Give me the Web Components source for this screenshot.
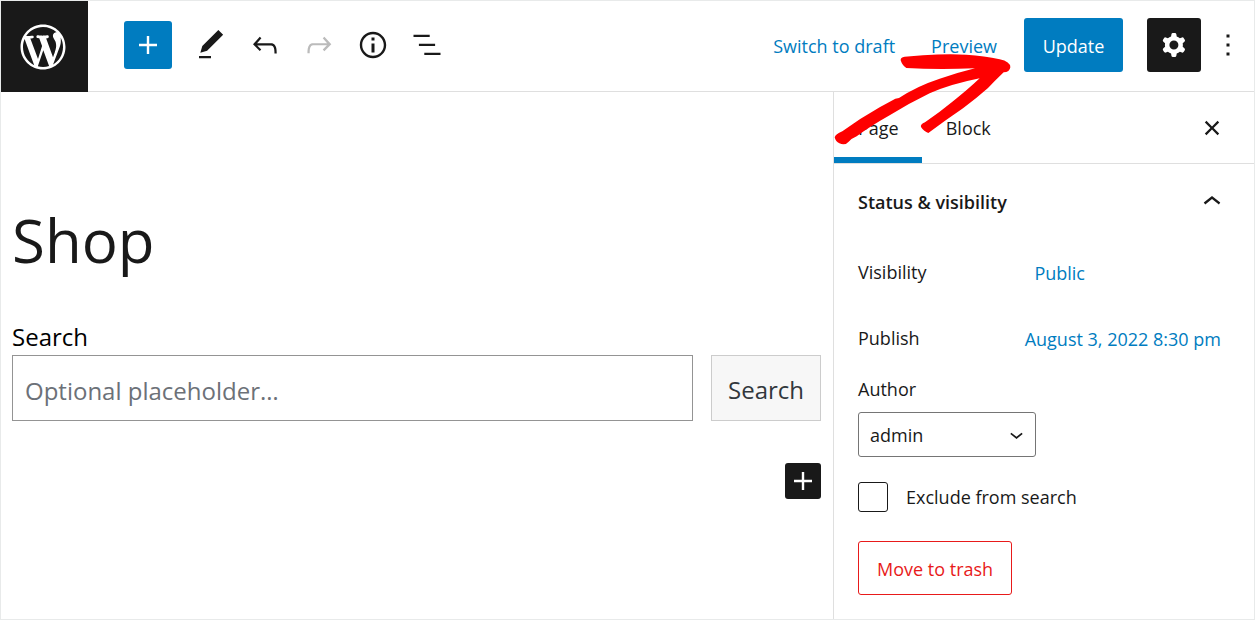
<!DOCTYPE html>
<html lang="en">
<head>
<meta charset="utf-8">
<meta name="viewport" content="width=device-width, initial-scale=1">
<title>Edit Page</title>
<style>
    :root {
        --blue: #007cc0;
        --ink: #191919;
        --line: #dfdfdf;
    }
    body {
        margin: 0;
        background: #fff;
        color: var(--ink);
        font: 18px/27px "Open Sans", "Noto Sans", sans-serif;
    }
</style>
</head>
<body>
<page-editor>
    <editor-header slot="header"></editor-header>
    <editor-canvas slot="content" heading="Shop"></editor-canvas>
    <settings-sidebar slot="sidebar">
        <settings-row>Visibility<button slot="value">Public</button></settings-row>
        <settings-row>Publish<button slot="value">August 3, 2022 8:30 pm</button></settings-row>
    </settings-sidebar>
    <pointer-arrow slot="overlay"></pointer-arrow>
</page-editor>

<script>
const icons = {
    wordpress: 'M20 10c0-5.51-4.49-10-10-10C4.48 0 0 4.49 0 10c0 5.52 4.48 10 10 10 5.51 0 10-4.48 10-10zM7.78 15.37L4.37 6.22c.55-.02 1.17-.08 1.17-.08.5-.06.44-1.13-.06-1.11 0 0-1.45.11-2.37.11-.18 0-.37 0-.58-.01C4.12 2.69 6.87 1.11 10 1.11c2.33 0 4.45.87 6.05 2.34-.68-.11-1.65.39-1.65 1.58 0 .74.45 1.36.9 2.1.35.61.55 1.36.55 2.46 0 1.49-1.4 5-1.4 5l-3.03-8.37c.54-.02.82-.17.82-.17.5-.05.44-1.25-.06-1.22 0 0-1.44.12-2.38.12-.87 0-2.33-.12-2.33-.12-.5-.03-.56 1.2-.06 1.22l.92.08 1.26 3.41zM17.41 10c.24-.64.74-1.87.43-4.25.7 1.29 1.05 2.71 1.05 4.25 0 3.29-1.73 6.24-4.4 7.78.97-2.59 1.94-5.2 2.92-7.78zM6.1 18.09C3.12 16.65 1.11 13.53 1.11 10c0-1.3.23-2.48.72-3.59C3.25 10.3 4.67 14.2 6.1 18.09zm4.03-6.63l2.58 6.98c-.86.29-1.76.45-2.71.45-.79 0-1.57-.11-2.29-.33.81-2.38 1.62-4.74 2.42-7.1z',
    plus: 'M18 11.2h-5.2V6h-1.6v5.2H6v1.6h5.2V18h1.6v-5.2H18z',
    edit: 'M20.1 5.1L16.9 2 6.2 12.7l-1.3 4.4 4.5-1.3L20.1 5.1zM4 20.8h8v-1.5H4v1.5z',
    undo: 'M18.3 11.7c-.6-.6-1.4-.9-2.3-.9H6.7l2.9-3.3-1.1-1-4.5 5L8.5 16l1-1-2.7-2.7H16c.5 0 .9.2 1.3.5 1 1 1 3.4 1 4.5v.3h1.5v-.2c0-1.5 0-4.3-1.5-5.7z',
    redo: 'M15.6 6.5l-1.1 1 2.9 3.3H8c-.9 0-1.7.3-2.3.9-1.4 1.5-1.4 4.2-1.4 5.6v.2h1.5v-.3c0-1.1 0-3.5 1-4.5.3-.3.7-.5 1.3-.5h9.2L14.5 15l1.1 1.1 4.6-4.6-4.6-5z',
    info: 'M12 3.2c-4.8 0-8.8 3.9-8.8 8.8 0 4.8 3.9 8.8 8.8 8.8 4.8 0 8.8-3.9 8.8-8.8 0-4.8-4-8.8-8.8-8.8zm0 16c-4 0-7.2-3.3-7.2-7.2C4.8 8 8 4.8 12 4.8s7.2 3.3 7.2 7.2c0 4-3.2 7.2-7.2 7.2zM11 17h2v-6h-2v6zm0-8h2V7h-2v2z',
    list: 'M13.8 5.2H3v1.5h10.8V5.2zm-3.6 12v1.5H21v-1.5H10.2zm7.2-6H6.6v1.5h10.8v-1.5z',
    cog: 'M10.289 4.836A1 1 0 0111.275 4h1.306a1 1 0 01.987.836l.244 1.466c.787.26 1.503.679 2.108 1.218l1.393-.522a1 1 0 011.216.437l.653 1.13a1 1 0 01-.23 1.273l-1.148.944a6.025 6.025 0 010 2.435l1.149.946a1 1 0 01.23 1.272l-.653 1.13a1 1 0 01-1.216.437l-1.394-.522c-.605.54-1.32.958-2.108 1.218l-.244 1.466a1 1 0 01-.987.836h-1.306a1 1 0 01-.986-.836l-.244-1.466a5.995 5.995 0 01-2.108-1.218l-1.394.522a1 1 0 01-1.217-.436l-.653-1.131a1 1 0 01.23-1.272l1.149-.946a6.026 6.026 0 010-2.435l-1.148-.944a1 1 0 01-.23-1.272l.653-1.131a1 1 0 011.217-.437l1.393.522a5.994 5.994 0 012.108-1.218l.244-1.466zM14.929 12a3 3 0 11-6 0 3 3 0 016 0z',
    more: 'M13 19h-2v-2h2v2zm0-6h-2v-2h2v2zm0-6h-2V5h2v2z',
    close: 'M12 13.06l3.712 3.713 1.061-1.06L13.061 12l3.712-3.712-1.06-1.06L12 10.938 8.288 7.227l-1.061 1.06L10.939 12l-3.712 3.712 1.06 1.061L12 13.061z',
    up: 'M6.5 12.4L12 8l5.5 4.4-.9 1.2L12 10l-4.5 3.6-1-1.2z',
    down: 'M17.5 11.6L12 16l-5.5-4.4.9-1.2L12 14l4.5-3.6 1 1.2z'
};

// Shared by every element that has controls
const base = `
    *, *::before { box-sizing: border-box; }
    button, input, select { font: inherit; color: inherit; margin: 0; }
    button {
        display: flex;
        align-items: center;
        justify-content: center;
        border: 0;
        padding: 0;
        background: none;
        border-radius: 3px;
        cursor: pointer;
        white-space: nowrap;
    }
`;

class WpIcon extends HTMLElement {
    constructor() {
        super();
        this.attachShadow({mode: 'open'});
        const name = this.getAttribute('name');
        const box = name === 'wordpress' ? '-2 -2 24 24' : '0 0 24 24';
        this.shadowRoot.innerHTML = `
            <style>
                :host { display: block; width: 36px; height: 36px; flex: none; }
                svg { display: block; width: 100%; height: 100%; fill: currentColor; }
            </style>
            <svg viewBox="${box}" aria-hidden="true"><path fill-rule="evenodd" d="${icons[name]}"/></svg>
        `;
    }
}

class PageEditor extends HTMLElement {
    constructor() {
        super();
        this.attachShadow({mode: 'open'});
        this.shadowRoot.innerHTML = `
            <style>
                :host {
                    display: flex;
                    flex-direction: column;
                    position: relative;
                    box-sizing: border-box;
                    min-height: 100vh;
                    border: 1px solid #e8eaea;
                }
                .body { display: flex; flex: 1; }
                ::slotted(editor-canvas) { flex: 1; min-width: 0; }
            </style>
            <slot name="header"></slot>
            <div class="body">
                <slot name="content"></slot>
                <slot name="sidebar"></slot>
            </div>
            <slot name="overlay"></slot>
        `;
    }
}

class EditorHeader extends HTMLElement {
    constructor() {
        super();
        this.attachShadow({mode: 'open'});
        this.shadowRoot.innerHTML = `
            <style>
                ${base}
                :host { display: block; }
                header { display: flex; justify-content: space-between; }
                .logo {
                    display: flex;
                    align-items: center;
                    padding: 0 18px 0 15px;
                    background: var(--ink);
                    color: #fff;
                }
                .logo wp-icon { width: 54px; height: 54px; }
                .bar {
                    display: flex;
                    flex: 1;
                    align-items: center;
                    justify-content: space-between;
                    padding: 17px 8px 19px 36px;
                    border-bottom: 1px solid var(--line);
                }
                .tools, .actions { display: flex; align-items: center; }
                .tools button { width: 54px; height: 54px; }
                .tools .add {
                    width: 48px;
                    height: 48px;
                    margin-right: 12px;
                    background: var(--blue);
                    color: #fff;
                }
                .tools button:disabled { color: #bbb; }
                .actions button { height: 54px; }
                .actions .link { padding: 2px 18px 0; color: var(--blue); }
                .actions .update {
                    min-width: 99px;
                    margin-left: 9px;
                    padding: 2px 18px 0;
                    background: var(--blue);
                    color: #fff;
                }
                .actions .settings { width: 54px; margin: 0 9px 0 24px; background: var(--ink); color: #fff; }
            </style>
            <header>
                <a class="logo" href="#" aria-label="View Pages"><wp-icon name="wordpress"></wp-icon></a>
                <div class="bar">
                    <div class="tools">
                        <button class="add" aria-label="Add block"><wp-icon name="plus"></wp-icon></button>
                        <button aria-label="Tools"><wp-icon name="edit"></wp-icon></button>
                        <button aria-label="Undo"><wp-icon name="undo"></wp-icon></button>
                        <button aria-label="Redo" disabled><wp-icon name="redo"></wp-icon></button>
                        <button aria-label="Details"><wp-icon name="info"></wp-icon></button>
                        <button aria-label="List View"><wp-icon name="list"></wp-icon></button>
                    </div>
                    <div class="actions">
                        <button class="link">Switch to draft</button>
                        <button class="link">Preview</button>
                        <button class="update">Update</button>
                        <button class="settings" aria-label="Settings"><wp-icon name="cog"></wp-icon></button>
                        <button aria-label="Options"><wp-icon name="more"></wp-icon></button>
                    </div>
                </div>
            </header>
        `;
    }
}

class EditorCanvas extends HTMLElement {
    constructor() {
        super();
        this.attachShadow({mode: 'open'});
        this.shadowRoot.innerHTML = `
            <style>
                ${base}
                :host { display: block; font-size: 24px; line-height: 36px; }
                main {
                    display: flex;
                    flex-direction: column;
                    padding: 103px 12px 24px 11px;
                }
                h1 { margin: 0 0 34px; font-size: 60px; line-height: 90px; font-weight: 400; }
                label { color: #000; }
                form { display: flex; gap: 18px; }
                input {
                    flex: 1;
                    min-width: 0;
                    height: 66px;
                    padding: 4px 12px 0;
                    border: 1px solid #949494;
                    border-radius: 0;
                }
                input::placeholder { color: #6c7178; opacity: 1; }
                .search {
                    height: 66px;
                    padding: 4px 16px 0;
                    border: 1px solid #ccc;
                    border-radius: 0;
                    background: #f7f7f7;
                    color: #32373c;
                }
                .add {
                    align-self: flex-end;
                    width: 36px;
                    height: 36px;
                    margin-top: 42px;
                    background: var(--ink);
                    color: #fff;
                }
            </style>
            <main>
                <h1>${this.getAttribute('heading')}</h1>
                <label for="query">Search</label>
                <form>
                    <input id="query" type="text" placeholder="Optional placeholder…">
                    <button class="search" type="button">Search</button>
                </form>
                <button class="add" aria-label="Add block"><wp-icon name="plus"></wp-icon></button>
            </main>
        `;
    }
}

class SettingsRow extends HTMLElement {
    constructor() {
        super();
        this.attachShadow({mode: 'open'});
        this.shadowRoot.innerHTML = `
            <style>
                :host { display: flex; align-items: center; height: 54px; }
                .label { flex: 0 1 45%; min-width: 0; }
                ::slotted(button) {
                    flex: none;
                    height: 54px;
                    padding: 2px 9px 0;
                    border: 0;
                    background: none;
                    font: inherit;
                    color: var(--blue);
                    cursor: pointer;
                }
            </style>
            <span class="label"><slot></slot></span>
            <slot name="value"></slot>
        `;
    }
}

class SettingsSidebar extends HTMLElement {
    constructor() {
        super();
        this.attachShadow({mode: 'open'});
        this.shadowRoot.innerHTML = `
            <style>
                ${base}
                :host {
                    display: block;
                    box-sizing: border-box;
                    flex: 0 0 421px;
                    border-left: 1px solid var(--line);
                }
                .tabs {
                    display: flex;
                    height: 72px;
                    padding-right: 24px;
                    border-bottom: 1px solid var(--line);
                }
                .tabs button { padding: 2px 23px 0 24px; border-radius: 0; font-weight: 500; }
                .tabs .active { box-shadow: inset 0 -6px var(--blue); }
                .tabs .close { margin-left: auto; padding: 0; }
                h2 { margin: 0; font-size: inherit; }
                h2 button {
                    width: 100%;
                    height: 76px;
                    padding: 0 24px;
                    justify-content: space-between;
                    font-weight: 600;
                }
                .panel {
                    display: flex;
                    flex-direction: column;
                    align-items: flex-start;
                    padding: 5px 24px 24px;
                }
                .rows {
                    display: flex;
                    flex-direction: column;
                    gap: 12px;
                    width: 100%;
                }
                .author { margin: 11px 0 9px; }
                .select { display: grid; align-items: center; }
                .select > * { grid-area: 1 / 1; }
                select {
                    appearance: none;
                    width: 178px;
                    height: 45px;
                    padding: 2px 42px 0 11px;
                    border: 1px solid #757575;
                    border-radius: 3px;
                    background: #fff;
                }
                .select wp-icon {
                    justify-self: end;
                    width: 27px;
                    height: 27px;
                    margin-right: 6px;
                    pointer-events: none;
                }
                .check { display: flex; align-items: center; gap: 18px; margin: 25px 0 29px; }
                input {
                    appearance: none;
                    width: 30px;
                    height: 30px;
                    border: 1px solid var(--ink);
                    border-radius: 3px;
                }
                .trash {
                    height: 54px;
                    padding: 2px 18px 0;
                    border: 1px solid #e81a1a;
                    color: #e81a1a;
                }
            </style>
            <div class="tabs">
                <button class="active">Page</button>
                <button>Block</button>
                <button class="close" aria-label="Close settings"><wp-icon name="close"></wp-icon></button>
            </div>
            <h2><button aria-expanded="true">Status &amp; visibility<wp-icon name="up"></wp-icon></button></h2>
            <div class="panel">
                <div class="rows"><slot></slot></div>
                <label class="author" for="author">Author</label>
                <div class="select">
                    <select id="author"><option>admin</option></select>
                    <wp-icon name="down"></wp-icon>
                </div>
                <div class="check">
                    <input id="exclude" type="checkbox">
                    <label for="exclude">Exclude from search</label>
                </div>
                <button class="trash">Move to trash</button>
            </div>
        `;
    }
}

// Hand-drawn arrow that points at the Update button
class PointerArrow extends HTMLElement {
    constructor() {
        super();
        this.attachShadow({mode: 'open'});
        this.shadowRoot.innerHTML = `
            <style>
                :host {
                    display: block;
                    position: absolute;
                    top: 49px;
                    right: 241px;
                    width: 180px;
                    height: 100px;
                    pointer-events: none;
                }
                svg { display: block; width: 100%; height: 100%; fill: #fe0000; }
            </style>
            <svg viewBox="250 150 540 300" aria-hidden="true">
                <path d="M453 181Q452 172 465 170L520 166Q590 161 650 164Q705 167 750 178Q782 185 782 202Q780 217 762 217Q735 243 715 264Q680 295 640 325Q590 359 536 399Q523 395 514 381Q511 373 526 367Q570 337 610 304Q655 268 690 235Q600 253 540 280Q480 309 420 346Q360 380 321 409Q305 416 297 425Q286 438 269 430Q258 425 255 412Q257 403 278 394Q330 356 390 322L437 296L448 294Q500 259 570 236Q620 219 676 205Q560 209 470 204Q458 197 453 181Z"/>
            </svg>
        `;
    }
}

customElements.define('wp-icon', WpIcon);
customElements.define('page-editor', PageEditor);
customElements.define('editor-header', EditorHeader);
customElements.define('editor-canvas', EditorCanvas);
customElements.define('settings-row', SettingsRow);
customElements.define('settings-sidebar', SettingsSidebar);
customElements.define('pointer-arrow', PointerArrow);
</script>
</body>
</html>
